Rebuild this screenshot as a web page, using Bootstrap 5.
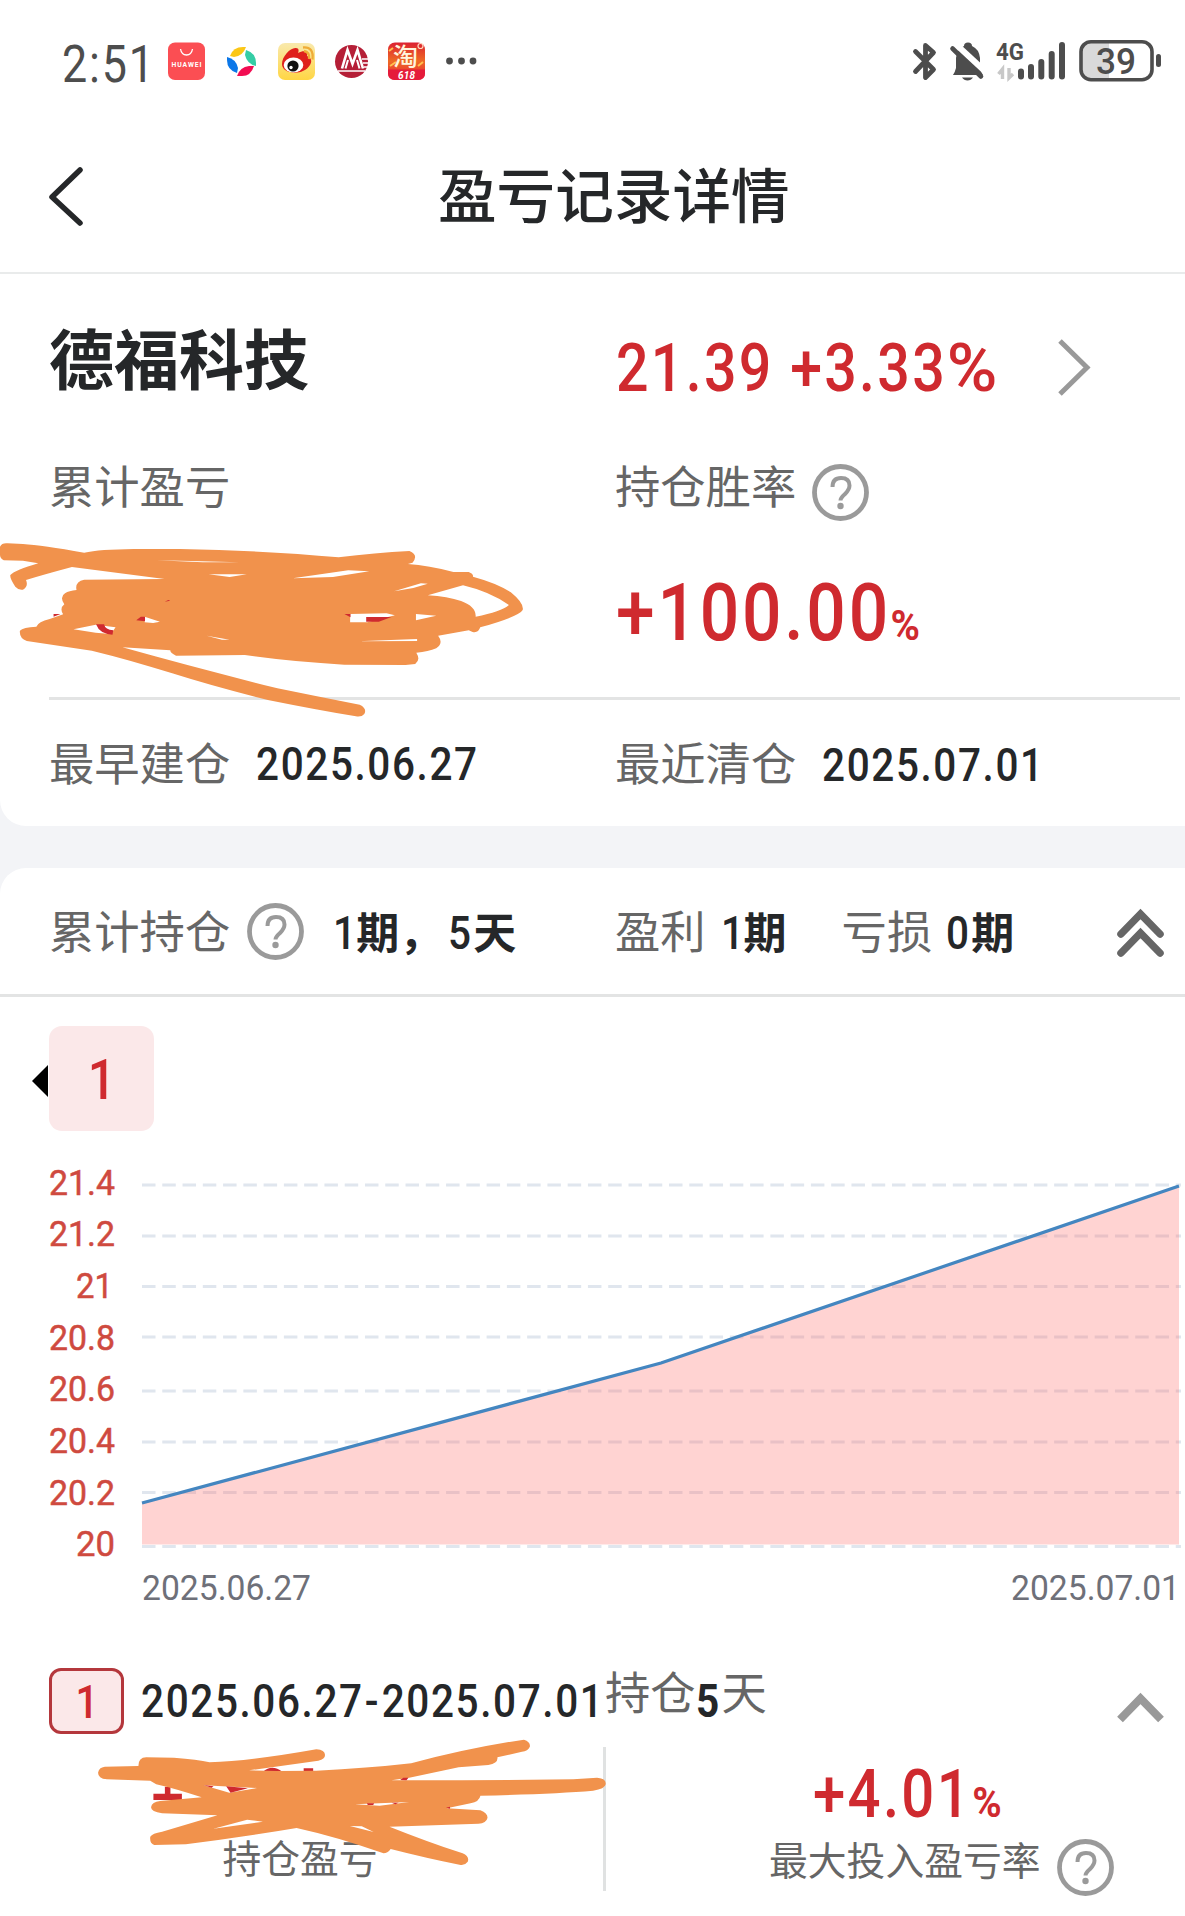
<!DOCTYPE html>
<html lang="zh-CN">
<head>
<meta charset="utf-8">
<meta name="viewport" content="width=device-width, initial-scale=1">
<title>盈亏记录详情</title>
<link rel="stylesheet" href="https://cdn.jsdelivr.net/npm/bootstrap@5.3.0/dist/css/bootstrap.min.css">
<script src="https://cdn.jsdelivr.net/npm/bootstrap@5.3.0/dist/js/bootstrap.bundle.min.js"></script>
<style>
  body { width: 1185px; height: 1916px; overflow: hidden; background: #f3f4f7; color: #252729; font-family: Roboto, "Noto Sans CJK SC", sans-serif; line-height: 1; }
  svg { display: block; flex: none; }
  .status-bar { height: 122px; padding-left: 62px; color: #4d4d4d; }
  .clock { width: 98px; padding-top: 3px; }
  .clock .num { font-size: 51px; font-weight: 450; }
  .title-bar { height: 152px; border-bottom: 2px solid #e9ebeb; }
  .title-bar h1 { font-size: 58.6px; font-weight: 500; line-height: 1; margin: 3px 0 0 352px; }
  .back-btn { margin-left: 46px; }
  .sheet { position: relative; background: #fff; }
  .sheet-top { border-bottom-left-radius: 26px; }
  .sheet-bottom { border-top-left-radius: 26px; margin-top: 42px; height: 1048px; }
  .lead-col { width: 616px; padding-left: 49px; flex: none; }
  .num { display: inline-block; white-space: nowrap; transform: scaleX(.88); transform-origin: 0 50%; letter-spacing: .04em; font-weight: 500; font-size: 46px; line-height: 1; padding-top: 3px; }
  .rise { color: #cf2a2f; }
  .cap { color: #666; font-size: 45.3px; white-space: nowrap; margin: 6px 0 0 -1px; }
  .lead-col .cap { margin-left: 0; }
  .cap-bold { font-weight: 700; font-size: 43px; margin-top: 6px; white-space: nowrap; }
  .row-name { height: 184px; }
  .row-name h2 { font-size: 65px; font-weight: 700; line-height: 1; margin: 0 0 7px; }
  .price { font-size: 66px; width: 438px; transform: scaleX(.868); margin-right: 4px; padding-top: 6px; }
  .price span { display: inline-block; transform: scaleX(1.2); transform-origin: 0 50%; }
  .row-cap { height: 64px; }
  .row-cap .cap { margin-top: 0; margin-bottom: 2px; }
  .row-big { height: 175px; }
  .rate { font-size: 79px; padding-top: 7px; }
  .rate small, .yield small { font-size: 42px; font-weight: 700; display: inline-block; transform: scaleX(1.08); transform-origin: 0 100%; }
  .rule { height: 3px; margin: 0 5px 0 49px; background: #e3e4e4; }
  .row-dates { height: 126px; }
  .row-sum { height: 129px; border-bottom: 3px solid #e3e4e4; }
  .chip-row { padding: 29px 0 0 32px; }
  .chip { width: 105px; height: 105px; border-radius: 13px; background: #fbe8e9; margin-left: 1px; }
  .chip .num { font-size: 56px; transform-origin: 50% 50%; padding-left: 3px; }
  .chart text { font-family: Roboto, sans-serif; font-size: 35px; }
  .row-period { height: 107px; padding: 14px 0 0 49px; }
  .row-period .cap { margin: 0 0 11px; }
  .row-period > .num { padding-top: 1px; }
  .tag { width: 75px; height: 66px; border: 3px solid #b4373c; border-radius: 12px; background: #fbe8e9; }
  .tag .num { transform-origin: 50% 50%; padding-left: 2px; }
  .row-detail { height: 169px; }
  .detail-left { width: 600px; padding-top: 94px; margin-right: 3px; }
  .detail-cap { font-size: 38.8px; color: #666; white-space: nowrap; line-height: 1; }
  .divider { width: 3px; height: 144px; background: #e0e2e2; }
  .yield { font-size: 66px; margin: 12px 0 0 207px; }
  .rate-cap { margin-left: 163px; margin-top: 11px; }
  .scribble { position: absolute; left: 0; }
  .scribble-a { top: 166px; }
  .scribble-b { top: 772px; }
</style>
</head>
<body>
<svg width="0" height="0" class="position-absolute">
  <symbol id="help" viewBox="0 0 57 57">
    <circle cx="28.500" cy="28.500" r="26" fill="none" stroke="#9a9a9a" stroke-width="4.800"/>
    <path d="M20.500 23q0-9 8.500-9t8.500 7.500q0 4-4.500 8.500q-4.500 4-4.500 6.500" fill="none" stroke="#9a9a9a" stroke-width="4"/>
    <circle cx="28.500" cy="42" r="3.200" fill="#9a9a9a"/>
  </symbol>
</svg>

<header class="status-bar bg-white d-flex align-items-center">
  <div class="clock"><span class="num">2:51</span></div>
  <svg width="330" height="60" viewBox="160 31 330 60">
    <defs>
      <linearGradient id="wb" x2="0" y2="1"><stop stop-color="#f9e9ad"/><stop offset="1" stop-color="#ffd644"/></linearGradient>
      <linearGradient id="tb" x2="0" y2="1"><stop stop-color="#dc2131"/><stop offset=".5" stop-color="#ee6b24"/><stop offset="1" stop-color="#e71c3d"/></linearGradient>
    </defs>
    <rect x="168" y="42.500" width="37" height="37.500" rx="7" fill="#fb4e53"/>
    <path d="M180.500 49q1 6 6 6t6-6" fill="none" stroke="#fff" stroke-width="1.300"/>
    <text x="171.500" y="66.500" font-size="6.800" font-weight="700" fill="#fff" textLength="30">HUAWEI</text>
    <path d="M230 56q3-9 13-9h3q-3 9-12 10z" fill="#fbc717"/>
    <path d="M246 50q10 3 10 13v3q-9-2-11-11z" fill="#35cda5"/>
    <path d="M227 57q9 2 11 11l-1 5q-10-3-10-13z" fill="#0b77e8"/>
    <path d="M237 76q3-9 12-10l5 0q-3 10-12 10z" fill="#f20d52"/>
    <rect x="278" y="43" width="37" height="37" rx="7" fill="url(#wb)"/>
    <path d="M282 64c0-8 9-17 14-16 3 0 3 3 2 5 6-3 10-2 9 3 5 2 5 6 3 9-4 7-14 9-20 7-5-1-8-4-8-8z" fill="#df201c"/>
    <ellipse cx="293.500" cy="65" rx="9.800" ry="7.400" fill="#fff"/><circle cx="293" cy="66" r="5.600" fill="#111"/><circle cx="291" cy="67.500" r="1.700" fill="#fff"/>
    <path d="M304 51q6 1 5 8M303 47.500q11-1 9.500 12" fill="none" stroke="#efac37" stroke-width="2.300"/>
    <circle cx="351.500" cy="61.500" r="16.500" fill="#b51f37"/>
    <path d="M342 68.500L347.500 50 352.500 64 357.500 50 363 68.500" fill="none" stroke="#fff" stroke-width="2.600"/>
    <path d="M345.500 68.500L348 60M359.500 68.500L357 60" stroke="#fff" stroke-width="2"/>
    <path d="M338 71h27M362 59h6M363 63h5M364 67h4" stroke="#fff" stroke-width="1.600"/>
    <rect x="388" y="42.500" width="37" height="37.500" rx="7" fill="url(#tb)"/>
    <path d="M388 69.500h37v4q0 6.500-7 6.500h-23q-7 0-7-6.500z" fill="#e51b3b"/>
    <circle cx="420.500" cy="46" r="2.500" fill="none" stroke="#ffd9c0" stroke-width="1.200"/>
    <path d="M389 51l4-3M390 66l6-4M418 66l5-4" stroke="#ffc24f" stroke-width="2"/>
    <text x="393" y="66" font-size="25" font-weight="500" fill="#fff5dd" font-family="Noto Sans CJK SC">淘</text>
    <text x="398" y="79" font-size="10" font-weight="700" font-style="italic" fill="#fff" textLength="17">618</text>
    <g fill="#4d4d4d"><circle cx="449.500" cy="61" r="3.400"/><circle cx="461.500" cy="61" r="3.400"/><circle cx="473" cy="61" r="3.400"/></g>
  </svg>
  <svg class="ms-auto" width="285" height="60" viewBox="900 31 285 60">
    <path d="M915.500 51.500L933.500 69.500 925.500 77.500V45.500L933.500 52.500 915.500 71.500" fill="none" stroke="#4d4d4d" stroke-width="4.800" stroke-linejoin="round" stroke-linecap="round"/>
    <path d="M953 75q2-3 3-7V58q1-9 8-12 0-3.500 4-3.500t4 3.500q7 3 8 12v10q1 4 3 7z" fill="#4d4d4d"/>
    <path d="M962 77.500h11q-2 3-5.500 3t-5.500-3z" fill="#4d4d4d"/>
    <path d="M955 43.500L988 74" stroke="#fff" stroke-width="6"/>
    <path d="M952.500 48.500L981 76.500" stroke="#4d4d4d" stroke-width="4.600" stroke-linecap="round"/>
    <text x="996" y="60" font-size="24" font-weight="700" fill="#4d4d4d" textLength="28" lengthAdjust="spacingAndGlyphs">4G</text>
    <path d="M1002.500 79V69l-4 5M1009 68v10l4-4" fill="none" stroke="#c8c8c8" stroke-width="3.400"/>
    <g stroke="#4d4d4d" stroke-width="6" stroke-linecap="round"><path d="M1021 71.500V76.500M1031 67V76.500M1041.300 62V76.500M1051.700 54V76.500M1062 45V76.500"/></g>
    <rect x="1081" y="42" width="71" height="37.500" rx="10" fill="#fff"/>
    <path d="M1109 42V79.500H1091q-10 0-10-10V52q0-10 10-10z" fill="#d9d9d9"/>
    <rect x="1081" y="41.700" width="71" height="38" rx="10" fill="none" stroke="#4d4d4d" stroke-width="3.600"/>
    <rect x="1156" y="54" width="5" height="13" rx="2.500" fill="#4d4d4d"/>
    <text x="1096" y="73.500" font-size="36" font-weight="500" fill="#4d4d4d" textLength="40" lengthAdjust="spacingAndGlyphs">39</text>
  </svg>
</header>

<nav class="title-bar bg-white d-flex align-items-center">
  <svg class="back-btn" width="40" height="64" viewBox="0 0 40 64"><path d="M34 5L6 32 34 58" fill="none" stroke="#252729" stroke-width="5.500" stroke-linecap="round" stroke-linejoin="round"/></svg>
  <h1 class="text-nowrap">盈亏记录详情</h1>
</nav>

<main>
  <section class="sheet sheet-top">
    <div class="row-name d-flex align-items-center">
      <div class="lead-col"><h2>德福科技</h2></div>
      <span class="num rise price">21.39 +3.33<span>%</span></span>
      <svg class="mt-1" width="34" height="60" viewBox="0 0 34 60"><path d="M2 3L29 29.500 2 56" fill="none" stroke="#999" stroke-width="5"/></svg>
    </div>
    <div class="row-cap d-flex align-items-center">
      <div class="lead-col"><div class="cap">累计盈亏</div></div>
      <div class="cap">持仓胜率</div>
      <svg class="ms-3 mt-1" width="57" height="57"><use href="#help"/></svg>
    </div>
    <div class="row-big d-flex align-items-center">
      <div class="lead-col"></div>
      <span class="num rise rate">+100.00<small>%</small></span>
    </div>
    <div class="rule"></div>
    <div class="row-dates d-flex align-items-center">
      <div class="lead-col d-flex align-items-center"><div class="cap">最早建仓</div><span class="num" style="margin-left:26px">2025.06.27</span></div>
      <div class="cap">最近清仓</div><span class="num" style="margin-left:26px">2025.07.01</span>
    </div>
    <svg class="scribble scribble-a" width="600" height="300" viewBox="0 0 1568 900" preserveAspectRatio="none">
      <path fill="#f1924c" d="M20 310L60 312Q110 316 220 338Q260 328 350 327L470 327Q700 332 885 352Q980 338 1070 333Q1095 345 1078 368L1066 372Q1120 376 1185 396L1225 396Q1238 402 1236 410Q1300 430 1335 457Q1370 490 1366 510Q1355 530 1255 562Q1250 580 1235 576L1225 571 1145 587Q1160 610 1140 625Q1120 635 1088 638Q1100 660 1085 672L1060 675 900 674Q760 665 640 645L460 647Q445 640 445 631L320 622Q500 680 725 745Q830 770 940 794Q960 805 952 822Q945 832 930 829Q830 810 700 780Q560 740 450 700Q340 660 240 632L70 603Q50 595 52 572Q60 562 95 560Q100 545 130 537L165 523Q155 505 168 493Q155 470 170 460Q180 452 200 450Q195 425 220 419L430 417 188 381Q110 405 68 420Q75 440 60 449Q50 452 40 440Q25 415 27 405Q40 390 100 370L60 362 10 361Q0 355 0 345V320Q5 308 20 310Z"/>
      <path fill="#fff" d="M1118 466L1210 436Q1280 455 1330 495Q1310 515 1243 530Q1245 500 1205 483Q1170 470 1118 466ZM545 403H645L600 411ZM765 415L910 391 965 394 870 411ZM1030 454L1100 430 1118 431 1080 444ZM192 568L250 554 302 562 290 582 250 578ZM378 547V530L418 545 400 549ZM915 547V522L1010 520 1032 526 960 547ZM1087 522L1140 527 1087 541ZM935 604L1090 597V603ZM410 361L500 363 625 367 530 367ZM540 587L600 599 580 599Z"/>
      <path fill="#cf2a2f" d="M251 553H272Q275 570 296 571L294 584Q260 582 251 553ZM356 541L368 530H379V544ZM900 522H916V532ZM957 531H1023L990 545H957ZM140 522H158L140 530ZM430 485L440 480 445 482Z"/>
    </svg>
  </section>

  <section class="sheet sheet-bottom">
    <div class="row-sum d-flex align-items-center">
      <div class="lead-col d-flex align-items-center">
        <div class="cap">累计持仓</div>
        <svg width="57" height="57" style="margin-left:17px"><use href="#help"/></svg>
        <span class="num" style="margin-left:29px;width:23px">1</span><span class="cap-bold">期，</span><span class="num" style="width:25px;margin-left:6px">5</span><span class="cap-bold">天</span>
      </div>
      <div class="cap">盈利</div><span class="num" style="margin-left:15px;width:23px">1</span><span class="cap-bold">期</span>
      <div class="cap" style="margin-left:55px">亏损</div><span class="num" style="margin-left:14px;width:25px">0</span><span class="cap-bold">期</span>
      <svg class="ms-auto me-3 mt-1" width="57" height="54" viewBox="1112 906 57 54"><path d="M1121 934L1140.500 914 1160 934M1121 953L1140.500 933 1160 953" fill="none" stroke="#666" stroke-width="7.500" stroke-linecap="round"/></svg>
    </div>
    <div class="chip-row d-flex align-items-center">
      <svg class="mt-1" width="16" height="34" viewBox="0 0 16 34"><path d="M0 17L16 1V33Z"/></svg>
      <div class="chip d-flex align-items-center justify-content-center"><span class="num rise">1</span></div>
    </div>
    <svg class="chart" width="1185" height="509" viewBox="0 1131 1185 509">
      <g stroke="#e0e6ee" stroke-width="3.200" stroke-dasharray="13.500 6.770">
        <path d="M142 1185H1181M142 1236H1181M142 1286.500H1181M142 1337H1181M142 1391H1181M142 1442H1181M142 1492.500H1181M142 1546.500H1181"/>
      </g>
      <path d="M142 1503L662 1363 1179 1186V1544.500H142Z" fill="#ff6e6a" fill-opacity=".3"/>
      <path d="M142 1503L661 1363 1179 1186" fill="none" stroke="#4486c0" stroke-width="3.200"/>
      <g fill="#cf4a3f" stroke="#cf4a3f" stroke-width=".5">
        <text x="49" y="1195" textLength="66" lengthAdjust="spacingAndGlyphs">21.4</text>
        <text x="49" y="1246" textLength="66" lengthAdjust="spacingAndGlyphs">21.2</text>
        <text x="76" y="1298" textLength="37" lengthAdjust="spacingAndGlyphs">21</text>
        <text x="49" y="1350" textLength="66" lengthAdjust="spacingAndGlyphs">20.8</text>
        <text x="49" y="1401" textLength="66" lengthAdjust="spacingAndGlyphs">20.6</text>
        <text x="49" y="1453" textLength="66" lengthAdjust="spacingAndGlyphs">20.4</text>
        <text x="49" y="1505" textLength="66" lengthAdjust="spacingAndGlyphs">20.2</text>
        <text x="76" y="1556" textLength="39" lengthAdjust="spacingAndGlyphs">20</text>
      </g>
      <g fill="#6e7079">
        <text x="142" y="1600" textLength="169" lengthAdjust="spacingAndGlyphs">2025.06.27</text>
        <text x="1011" y="1600" textLength="169" lengthAdjust="spacingAndGlyphs">2025.07.01</text>
      </g>
    </svg>
    <div class="row-period d-flex align-items-center">
      <div class="tag d-flex align-items-center justify-content-center"><span class="num rise">1</span></div>
      <span class="num" style="width:464px;margin-left:17px">2025.06.27<span style="letter-spacing:.08em;margin-left:1px">-</span>2025.07.01</span>
      <div class="cap">持仓</div><span class="num" style="width:26px;font-weight:700">5</span><div class="cap">天</div>
      <svg class="ms-auto me-3" width="57" height="50" viewBox="1112 1676 57 50"><path d="M1120 1719.500L1140.500 1698.500 1161 1719.500" fill="none" stroke="#999" stroke-width="8"/></svg>
    </div>
    <div class="row-detail d-flex align-items-start">
      <div class="detail-left text-center detail-cap">持仓盈亏</div>
      <div class="divider"></div>
      <div>
        <div class="d-flex"><span class="num rise yield">+4.01<small>%</small></span></div>
        <div class="rate-cap d-flex align-items-center">
          <div class="detail-cap" style="margin-bottom:10px">最大投入盈亏率</div>
          <svg style="margin-left:16px" width="57" height="57"><use href="#help"/></svg>
        </div>
      </div>
    </div>
    <svg class="scribble scribble-b" width="620" height="276" viewBox="0 0 1568 828" preserveAspectRatio="none">
      <path fill="#cf2a2f" d="M388 461H417V440H431V461H460V480H388ZM665 395Q688 372 714 395ZM768 395V385H792V395Z"/>
      <path fill="#f1924c" d="M265 380L350 378Q350 352 370 352L440 353Q500 358 530 367Q640 362 800 328Q822 330 822 345Q822 358 805 362L630 391 700 393 800 392Q930 385 1040 370Q1180 325 1325 299Q1342 305 1340 320Q1335 333 1320 335L1258 352Q1260 370 1235 375L1160 382 1035 413 990 421H1170L1450 418 1510 413Q1532 415 1532 432Q1530 447 1500 452Q1400 462 1215 467Q1212 485 1190 490L1130 505 1215 511Q1233 520 1233 533Q1230 550 1210 551L985 560Q1080 605 1170 640Q1188 650 1183 665Q1175 677 1165 675Q1080 655 988 627Q980 640 970 640Q850 590 750 564Q620 590 470 613L390 615Q378 610 380 590Q385 580 410 575L550 526 410 520Q382 515 382 502Q384 485 405 483L510 472Q440 445 395 433L380 422 270 418Q248 415 248 398Q250 382 265 380Z"/>
      <path fill="#fff" d="M540 566L625 539 665 545ZM885 558L915 559 945 576ZM898 493L1035 486 960 497ZM515 436L650 444 580 458Z"/>
      <path fill="#cf2a2f" d="M515 435L540 439 535 443ZM572 439L627 445 583 458ZM1012 420L1020 413H1033L1028 421ZM928 490H946L944 495H930ZM990 488H1008L1000 493ZM1128 503L1138 500V506Z"/>
    </svg>
  </section>
</main>
</body>
</html>
